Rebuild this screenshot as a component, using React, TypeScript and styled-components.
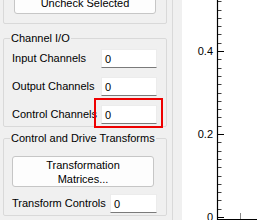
import React from 'react';
import styled, { createGlobalStyle } from 'styled-components';

const GlobalStyle = createGlobalStyle`
  html, body {
    margin: 0;
    padding: 0;
    background: #f0f0f0;
    overflow: hidden;
  }
  body {
    font-family: 'Liberation Sans', Arial, sans-serif;
    font-size: 11px;
    color: #000;
  }
`;

const Window = styled.div`
  display: flex;
  flex-direction: row;
  width: 257px;
  height: 220px;
  overflow: hidden;
  background: #f0f0f0;
`;

const SidePanel = styled.div`
  flex: 0 0 auto;
  width: 173px;
  height: 100%;
  box-sizing: border-box;
  padding-left: 3px;
  border-right: 1px solid #d9d9d9;
  overflow: hidden;
`;

const PanelColumn = styled.div`
  width: 164px;
  margin-top: -16px;
  display: flex;
  flex-direction: column;
`;

const PlainGroup = styled.div`
  border: 1px solid #d9d9d9;
  border-radius: 2px;
  padding: 7px 10px 9px 10px;
`;

const Group = styled.fieldset<{ $gap: number }>`
  margin: ${p => p.$gap}px 0 0 0;
  border: 1px solid #d9d9d9;
  border-radius: 2px;
  padding: 3px 9px 2px 8px;
  min-width: 0;
`;

const GroupTitle = styled.legend`
  padding: 0 1px;
  margin-left: -2px;
  line-height: 14px;
  font-size: 11px;
`;

const PushButton = styled.button<{ $h: number }>`
  display: block;
  width: 142px;
  height: ${p => p.$h}px;
  margin: 0;
  padding: 0;
  font-family: inherit;
  font-size: 11px;
  line-height: 14px;
  color: #000;
  background: #fdfdfd;
  border: 1px solid #c6c6c6;
  border-radius: 3px;
`;

const FormGrid = styled.div<{ $label: number; $gap: number }>`
  display: grid;
  grid-template-columns: ${p => p.$label}px 1fr;
  row-gap: ${p => p.$gap}px;
  align-items: center;
`;

const FieldLabel = styled.span`
  white-space: nowrap;
  line-height: 19px;
  padding-top: 1px;
`;

const FieldSlot = styled.div<{ $marked?: boolean }>`
  position: relative;
  &::after {
    content: '';
    display: ${p => (p.$marked ? 'block' : 'none')};
    position: absolute;
    left: -7px;
    right: -6px;
    top: -7px;
    bottom: -4px;
    border: 2px solid #ee0000;
    pointer-events: none;
  }
`;

const NumberBox = styled.div`
  height: 19px;
  box-sizing: border-box;
  background: #fff;
  border: 1px solid #ececec;
  border-bottom-color: #7a7a7a;
  padding: 0 3px;
  line-height: 18px;
`;

const Spacer = styled.div<{ $h: number }>`
  height: ${p => p.$h}px;
`;

const PlotArea = styled.div`
  margin-left: 9px;
  flex: 1;
  height: 100%;
  background: #fff;
  overflow: hidden;
`;

const AxisLabel = styled.text`
  font-family: 'Liberation Sans', Arial, sans-serif;
  font-size: 11px;
  fill: #000;
`;

const channelRows = [
  { label: 'Input Channels', value: '0' },
  { label: 'Output Channels', value: '0' },
  { label: 'Control Channels', value: '0', marked: true },
];

const transformRows = [{ label: 'Transform Controls', value: '0' }];

const AXIS_X = 35;
const ZERO_Y = 217;
const PX_PER_UNIT = 415;

const Plot = () => {
  const ticks = [];
  for (let k = 0; k <= 26; k++) {
    const y = ZERO_Y - k * 0.02 * PX_PER_UNIT;
    const major = k % 10 === 0;
    ticks.push(
      <line
        key={k}
        x1={AXIS_X}
        x2={AXIS_X + (major ? 7 : 4.5)}
        y1={Math.round(y) + 0.5}
        y2={Math.round(y) + 0.5}
        stroke="#000"
        strokeWidth={1}
        opacity={major ? 1 : 0.75}
      />
    );
  }
  const labels = [0, 0.2, 0.4];
  return (
    <svg width="75" height="220" viewBox="0 0 75 220">
      <line x1={AXIS_X + 0.5} x2={AXIS_X + 0.5} y1={0} y2={220} stroke="#000" strokeWidth={1.2} />
      <line x1={AXIS_X} x2={75} y1={219.5} y2={219.5} stroke="#000" strokeWidth={1.2} />
      <line x1={58.5} x2={58.5} y1={213} y2={219} stroke="#888" strokeWidth={1} />
      {ticks}
      {labels.map(v => (
        <AxisLabel key={v} x={31} y={ZERO_Y - v * PX_PER_UNIT + 4} textAnchor="end">
          {v === 0 ? '0' : v.toFixed(1)}
        </AxisLabel>
      ))}
    </svg>
  );
};

export default function App() {
  return (
    <>
      <GlobalStyle />
      <Window>
        <SidePanel>
          <PanelColumn>
            <PlainGroup>
              <PushButton $h={22}>Uncheck Selected</PushButton>
            </PlainGroup>

            <Group $gap={7}>
              <GroupTitle>Channel I/O</GroupTitle>
              <FormGrid $label={89} $gap={8}>
                {channelRows.map(r => (
                  <React.Fragment key={r.label}>
                    <FieldLabel>{r.label}</FieldLabel>
                    <FieldSlot $marked={r.marked}>
                      <NumberBox>{r.value}</NumberBox>
                    </FieldSlot>
                  </React.Fragment>
                ))}
              </FormGrid>
            </Group>

            <Group $gap={4}>
              <GroupTitle>Control and Drive Transforms</GroupTitle>
              <Spacer $h={8} />
              <PushButton $h={31}>
                Transformation
                <br />
                Matrices...
              </PushButton>
              <Spacer $h={6} />
              <FormGrid $label={98} $gap={4}>
                {transformRows.map(r => (
                  <React.Fragment key={r.label}>
                    <FieldLabel>{r.label}</FieldLabel>
                    <FieldSlot>
                      <NumberBox>{r.value}</NumberBox>
                    </FieldSlot>
                  </React.Fragment>
                ))}
              </FormGrid>
            </Group>
          </PanelColumn>
        </SidePanel>
        <PlotArea>
          <Plot />
        </PlotArea>
      </Window>
    </>
  );
}
